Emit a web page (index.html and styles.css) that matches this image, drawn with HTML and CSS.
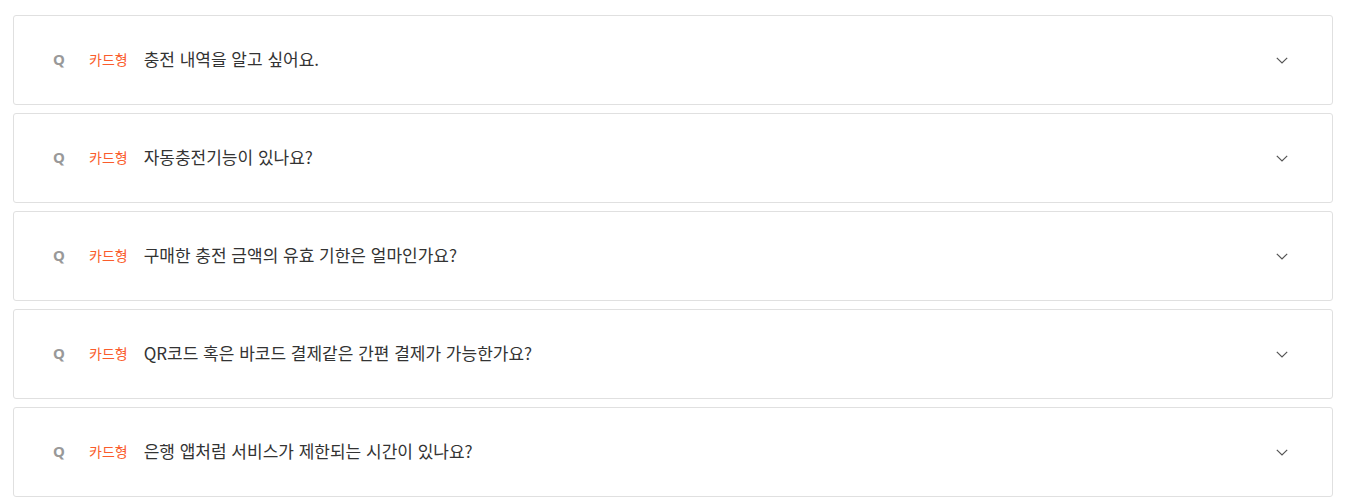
FILE: index.html
```html
<!DOCTYPE html>
<html lang="ko">
<head>
<meta charset="utf-8">
<link rel="stylesheet" href="styles.css">
</head>
<body>
<div class="faq">
  <div class="item"><span class="q">Q</span><span class="cat">카드형</span><span class="title">충전 내역을 알고 싶어요.</span><svg class="chev" viewBox="0 0 12 7" width="12" height="7"><path d="M0.8 0.8l5.2 5.2 5.2-5.2" fill="none" stroke="#555" stroke-width="1.2"/></svg></div>
  <div class="item"><span class="q">Q</span><span class="cat">카드형</span><span class="title">자동충전기능이 있나요?</span><svg class="chev" viewBox="0 0 12 7" width="12" height="7"><path d="M0.8 0.8l5.2 5.2 5.2-5.2" fill="none" stroke="#555" stroke-width="1.2"/></svg></div>
  <div class="item"><span class="q">Q</span><span class="cat">카드형</span><span class="title">구매한 충전 금액의 유효 기한은 얼마인가요?</span><svg class="chev" viewBox="0 0 12 7" width="12" height="7"><path d="M0.8 0.8l5.2 5.2 5.2-5.2" fill="none" stroke="#555" stroke-width="1.2"/></svg></div>
  <div class="item"><span class="q">Q</span><span class="cat">카드형</span><span class="title">QR코드 혹은 바코드 결제같은 간편 결제가 가능한가요?</span><svg class="chev" viewBox="0 0 12 7" width="12" height="7"><path d="M0.8 0.8l5.2 5.2 5.2-5.2" fill="none" stroke="#555" stroke-width="1.2"/></svg></div>
  <div class="item"><span class="q">Q</span><span class="cat">카드형</span><span class="title">은행 앱처럼 서비스가 제한되는 시간이 있나요?</span><svg class="chev" viewBox="0 0 12 7" width="12" height="7"><path d="M0.8 0.8l5.2 5.2 5.2-5.2" fill="none" stroke="#555" stroke-width="1.2"/></svg></div>
</div>
</body>
</html>
```
FILE: styles.css
```css
html, body { margin: 0; padding: 0; background: #fff; }
body { font-family: "Noto Sans CJK KR", "Noto Sans", sans-serif; color: #333; }
.faq { display: flex; flex-direction: column; gap: 8px; padding: 15px 12px 0 13px; }
.item {
  display: flex; align-items: center; height: 90px; box-sizing: border-box;
  border: 1px solid #e0e0e0; border-radius: 3px; padding: 0 44px 3px 39px;
}
.q { width: 36px; font-family: "Noto Sans", sans-serif; font-weight: 700; font-size: 15px; color: #999; }
.cat { font-size: 14px; color: #fa5c2c; margin-right: 16px; }
.title { flex: 1; font-size: 17px; color: #333; }
.chev { display: block; margin-top: 3px; }
```
